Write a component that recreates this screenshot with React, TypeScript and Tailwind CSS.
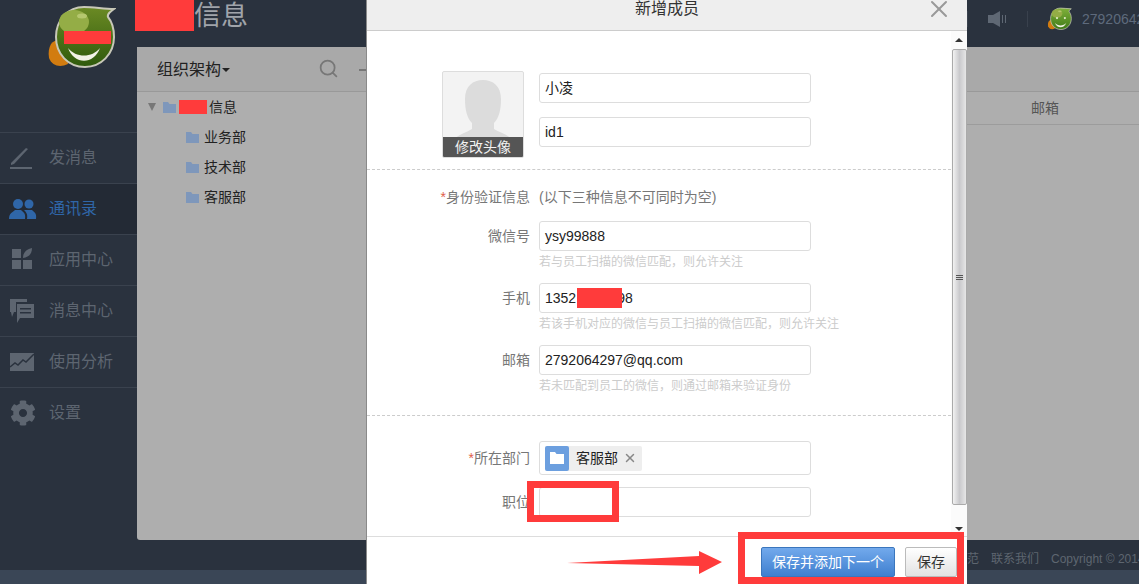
import { FaCog } from 'react-icons/fa'
import { Search, X } from 'lucide-react'

const navItems = ['发消息', '通讯录', '应用中心', '消息中心', '使用分析', '设置']

function NavIcon({ index }: { index: number }) {
  const color = index === 1 ? '#2f66a8' : '#5d6570'
  if (index === 5) return <FaCog size={26} color={color} />
  return (
    <svg width="28" height="28" viewBox="0 0 28 28" fill={color}>
      {index === 0 && (
        <>
          <path d="M2 19 L17 4 L19 5 L5 20 L2 21 Z" />
          <rect x="1" y="23" width="22" height="2" />
        </>
      )}
      {index === 1 && (
        <>
          <circle cx="9" cy="9" r="5" />
          <path d="M0 24 C0 18 4 17 6 15 H12 C14 17 17 18 16 24 Z" />
          <circle cx="20" cy="9" r="4.5" />
          <path d="M18 24 C19 19 17 17 15 15 H23 C25 17 28 18 27 24 Z" />
        </>
      )}
      {index === 2 && (
        <>
          <rect x="3" y="3" width="9" height="9" />
          <path d="M14 12 C14 6 18 3 23 2 C23 8 20 11 14 12 Z" />
          <rect x="3" y="14" width="9" height="9" />
          <rect x="14" y="14" width="9" height="9" />
        </>
      )}
      {index === 3 && (
        <>
          <path d="M1 2 H18 V5 H7 V15 H5 L3 20 L2 15 H1 Z" />
          <path d="M8 7 H25 V21 H11 L8 26 V21 Z" />
          <rect x="11" y="11" width="11" height="1.5" fill="#2a323e" />
          <rect x="11" y="15" width="11" height="1.5" fill="#2a323e" />
        </>
      )}
      {index === 4 && (
        <>
          <rect x="1" y="5" width="24" height="18" />
          <path d="M1 19 L6 15 L9 17 L14 12 L17 14 L25 6" fill="none" stroke="#2a323e" strokeWidth="1.5" />
        </>
      )}
    </svg>
  )
}

function Logo({ size, redacted, id }: { size: number; redacted?: boolean; id: string }) {
  return (
    <svg width={size} height={size} viewBox="0 0 70 70">
      <defs>
        <linearGradient id={id} x1="0" y1="0" x2="0" y2="1">
          <stop offset="0" stopColor={redacted ? '#6b8a24' : '#7fb03a'} />
          <stop offset="1" stopColor={redacted ? '#2f5a0c' : '#3f7a18'} />
        </linearGradient>
      </defs>
      <path d="M5 40 C10 34 14 36 20 40 L22 60 C14 64 6 62 3 54 C2 48 3 44 5 40 Z" fill="#d27c10" />
      <path d="M38 3 C48 3 58 5 68 5 C64 8 61 10 62 13 C67 19 68 26 68 33 C68 50 55 63 39 63 C22 63 10 50 10 33 C10 16 22 3 38 3 Z" fill={`url(#${id})`} stroke="#c8c8b8" strokeWidth="2" />
      <ellipse cx="28" cy="18" rx="15" ry="12" fill="#94ad46" />
      <ellipse cx="36" cy="12" rx="5" ry="2.5" fill="#b5c76e" />
      <path d="M22 44 C30 54 46 54 54 44 C48 61 28 61 22 44 Z" fill="#f2f2e6" />
      {redacted ? (
        <rect x="18" y="27" width="47" height="13" fill="#ff3b3b" />
      ) : (
        <>
          <circle cx="28" cy="31" r="3" fill="#e4ecc8" />
          <circle cx="50" cy="31" r="3" fill="#e4ecc8" />
        </>
      )}
    </svg>
  )
}

function FolderIcon() {
  return (
    <svg width="13" height="12" viewBox="0 0 13 12" fill="#7e97bb" className="shrink-0">
      <path d="M0 1 H5 L6.5 3 H13 V12 H0 Z" />
    </svg>
  )
}

function Field({ label, hint, children }: { label: string; hint: string; children: React.ReactNode }) {
  return (
    <div>
      <div className="flex items-center">
        <div className="w-[163px] text-right text-[14px] text-[#777]">{label}</div>
        <div className="ml-[9px] flex h-[30px] w-[272px] items-center rounded-[3px] border border-[#ddd] px-[5px] text-[14px] text-[#222]">
          {children}
        </div>
      </div>
      <div className="ml-[172px] flex h-5 items-center pt-[1px] text-[12px] whitespace-nowrap text-[#ccc]">{hint}</div>
    </div>
  )
}

function Scrollbar() {
  return (
    <div className="flex h-full w-[16px] shrink-0 flex-col items-center bg-[#fbfbfb]">
      <div className="flex h-[18px] items-center">
        <div className="h-0 w-0 border-x-[4px] border-b-[4px] border-x-transparent border-b-[#333]" />
      </div>
      <div className="flex h-[456px] w-[15px] flex-col items-center justify-center gap-[1px] rounded-[2px] border border-[#aaa] bg-gradient-to-r from-[#f2f2f2] via-[#c9c9cc] to-[#e6e6e6]">
        <div className="h-px w-[7px] bg-[#555]" />
        <div className="h-px w-[7px] bg-[#555]" />
        <div className="h-px w-[7px] bg-[#555]" />
      </div>
      <div className="flex flex-1 items-end pb-[5px]">
        <div className="h-0 w-0 border-x-[4px] border-t-[4px] border-x-transparent border-t-[#333]" />
      </div>
    </div>
  )
}

function Modal() {
  return (
    <div className="absolute top-0 left-[366px] flex h-[584px] w-[601px] flex-col border-l border-[#8a8a8a] bg-white">
      <div className="relative flex h-[31px] shrink-0 justify-center border-b border-[#ccc] bg-[#eee]">
        <div className="text-[16px] leading-[17px] text-[#333]">新增成员</div>
        <X size={28} strokeWidth={1.7} color="#999" className="absolute top-[-5px] right-[14px]" />
      </div>
      <div className="flex h-[505px] shrink-0">
        <div className="flex-1">
          <div className="flex pt-10">
            <div className="relative ml-[75px] h-[87px] w-[82px] overflow-hidden rounded-[2px] border border-[#ddd] bg-[#f3f3f3]">
              <svg width="80" height="85" viewBox="0 0 80 85" fill="#dcdcdc">
                <path d="M40 8 C50 8 58 14 58 27 C58 38 56 46 51 51 V57 C56 60 63 62 69 67 V85 H11 V67 C17 62 24 60 29 57 V51 C24 46 22 38 22 27 C22 14 30 8 40 8 Z" />
              </svg>
              <div className="absolute inset-x-0 bottom-0 flex h-5 items-center justify-center bg-[#555] text-[14px] text-[#f2f2f2]">修改头像</div>
            </div>
            <div className="ml-[15px] flex flex-col gap-[14px] pt-[2px]">
              <div className="flex h-[30px] w-[272px] items-center rounded-[3px] border border-[#ddd] px-[5px] text-[14px] text-[#222]">小凌</div>
              <div className="flex h-[30px] w-[272px] items-center rounded-[3px] border border-[#ddd] px-[5px] text-[14px] text-[#222]">id1</div>
            </div>
          </div>
          <div className="mt-[11px] border-b border-dashed border-[#ccc]" />
          <div className="mt-[17px] flex h-5 items-center text-[14px] text-[#777]">
            <div className="w-[163px] text-right"><span className="text-[#e0604c]">*</span>身份验证信息</div>
            <div className="ml-[9px]">(以下三种信息不可同时为空)</div>
          </div>
          <div className="mt-[14px] flex flex-col gap-3">
            <Field label="微信号" hint="若与员工扫描的微信匹配，则允许关注">ysy99888</Field>
            <Field label="手机" hint="若该手机对应的微信与员工扫描的微信匹配，则允许关注">
              1352
              <span className="relative z-10 ml-px inline-block h-[20px] w-[45px] bg-[#ff3b3b]" />
              <span className="-ml-[5px]">98</span>
            </Field>
            <Field label="邮箱" hint="若未匹配到员工的微信，则通过邮箱来验证身份">2792064297@qq.com</Field>
          </div>
          <div className="mt-5 border-b border-dashed border-[#ccc]" />
          <div className="mt-[25px] flex items-center">
            <div className="w-[163px] text-right text-[14px] text-[#777]"><span className="text-[#e0604c]">*</span>所在部门</div>
            <div className="ml-[9px] flex h-[34px] w-[272px] items-center rounded-[3px] border border-[#ddd] px-[5px]">
              <div className="flex h-[25px] w-[97px] items-center rounded-[2px] bg-[#eee]">
                <div className="flex h-[25px] w-[24px] items-center justify-center rounded-[2px] bg-[#6c9fdf]">
                  <svg width="14" height="12" viewBox="0 0 14 12" fill="#fff"><path d="M0 0 H5 L6.5 2 H14 V12 H0 Z" /></svg>
                </div>
                <span className="ml-[7px] text-[14px] text-[#222]">客服部</span>
                <X size={14} strokeWidth={2.5} color="#888" className="ml-[5px]" />
              </div>
            </div>
          </div>
          <div className="mt-3 flex items-center">
            <div className="w-[163px] text-right text-[14px] text-[#777]">职位</div>
            <div className="ml-[9px] h-[30px] w-[272px] rounded-[3px] border border-[#ddd]" />
          </div>
        </div>
        <Scrollbar />
      </div>
      <div className="flex flex-1 justify-end gap-[10px] border-t border-[#ddd] pt-[10px] pr-[10px]">
        <div className="flex h-[30px] w-[134px] items-center justify-center rounded-[2px] border border-[#3b76bd] bg-gradient-to-b from-[#72a9ec] to-[#3f7fcf] text-[14px] text-white">保存并添加下一个</div>
        <div className="flex h-[30px] w-[52px] items-center justify-center rounded-[2px] border border-[#bbb] bg-gradient-to-b from-[#fff] to-[#e2e2e2] text-[14px] text-[#333]">保存</div>
      </div>
    </div>
  )
}

export default function App() {
  return (
    <div className="relative flex h-[584px] w-[1139px] flex-col overflow-hidden bg-[#2a323e] font-['Liberation_Sans','Noto_Sans_CJK_SC',sans-serif]">
      <div className="flex h-[570px]">
        <div className="w-[137px] shrink-0">
          <div className="flex h-[132px] pt-[4px] pl-[46px]">
            <Logo size={70} redacted id="logo-big" />
          </div>
          {navItems.map((item, i) => (
            <div key={item} className={`flex h-[51px] items-center border-t border-[#3a424e] ${i === 1 ? 'bg-[#232a35]' : ''}`}>
              <div className="flex w-[49px] justify-center pr-[3px]"><NavIcon index={i} /></div>
              <span className={`text-[16px] ${i === 1 ? 'text-[#2f66a8]' : 'text-[#5d6570]'}`}>{item}</span>
            </div>
          ))}
        </div>
        <div className="flex min-w-0 flex-1 flex-col">
          <div className="flex h-[47px] shrink-0 items-start">
            <div className="-ml-[2px] h-[31px] w-[59px] shrink-0 bg-[#ff3b3b]" />
            <div className="shrink-0 text-[27px] leading-[32px] text-[#a0a4aa]">信息</div>
            <div className="ml-[719px] flex h-[38px] shrink-0 items-center">
              <div className="h-4 w-px bg-[#39414d]" />
              <svg width="19" height="16" viewBox="0 0 19 16" fill="#5f6874" className="ml-[20px]">
                <path d="M0 4 H5 L12 0 V16 L5 12 H0 Z" />
                <rect x="14" y="4" width="1" height="8" />
                <rect x="17" y="4" width="1" height="8" />
              </svg>
              <div className="ml-[20px] h-4 w-px bg-[#39414d]" />
              <div className="ml-[19px]"><Logo size={25} id="logo-small" /></div>
              <span className="ml-[10px] text-[14px] whitespace-nowrap text-[#5e6a7c]">2792064297</span>
            </div>
          </div>
          <div className="flex flex-1 flex-col rounded-tl-[3px] rounded-bl-[3px] bg-[#aeaeae]">
            <div className="flex h-[45px] shrink-0 items-center border-b border-[#999] bg-[#a9a9a9] pt-px pl-5">
              <span className="text-[16px] text-[#222]">组织架构</span>
              <div className="ml-px h-0 w-0 border-x-[4px] border-t-[4px] border-x-transparent border-t-[#222]" />
              <Search size={21} strokeWidth={2} color="#777" className="ml-[88px] -mt-[2px]" />
              <div className="ml-[20px] h-[2px] w-[8px] bg-[#777]" />
            </div>
            <div className="flex flex-1">
              <div className="w-[230px] shrink-0 text-[14px] text-[#222]">
                <div className="flex h-[30px] items-center pl-[11px]">
                  <div className="h-0 w-0 border-x-[4px] border-t-[8px] border-x-transparent border-t-[#777]" />
                  <div className="ml-[7px]"><FolderIcon /></div>
                  <div className="ml-[3px] h-[14px] w-[28px] bg-[#ff3b3b]" />
                  <span className="ml-[2px]">信息</span>
                </div>
                {['业务部', '技术部', '客服部'].map(name => (
                  <div key={name} className="flex h-[30px] items-center gap-[5px] pl-[49px]">
                    <FolderIcon />
                    <span>{name}</span>
                  </div>
                ))}
              </div>
              <div className="flex-1">
                <div className="flex h-[33px] items-center justify-end border-b border-[#9c9c9c] pr-[80px] text-[14px] text-[#555]">邮箱</div>
              </div>
            </div>
          </div>
          <div className="flex h-[30px] shrink-0 items-center pt-[8px] pl-[818px] text-[12px] whitespace-nowrap text-[#5e6670]">
            <span>规范</span>
            <div className="mx-[6px] h-[13px] w-px bg-[#565e6a]" />
            <span>联系我们</span>
            <div className="mx-[6px] h-[13px] w-px bg-[#565e6a]" />
            <span>Copyright © 2014</span>
          </div>
        </div>
      </div>
      <div className="h-[14px] bg-[#3a4656]" />
      <Modal />
      {/* annotations drawn on top of the shot */}
      <div className="absolute top-[481px] left-[527px] h-[41px] w-[92px] border-[7px] border-[#ff3b3b]" />
      <div className="absolute top-[532px] left-[738px] h-[52px] w-[226px] border-[7px] border-[#ff3b3b]" />
      <svg className="absolute top-[545px] left-[560px]" width="170" height="35" viewBox="0 0 170 35" fill="#ff3b3b">
        <path d="M7 18 L139 11 L139 6 L162 17 L139 29 L139 21 Z" />
      </svg>
    </div>
  )
}
